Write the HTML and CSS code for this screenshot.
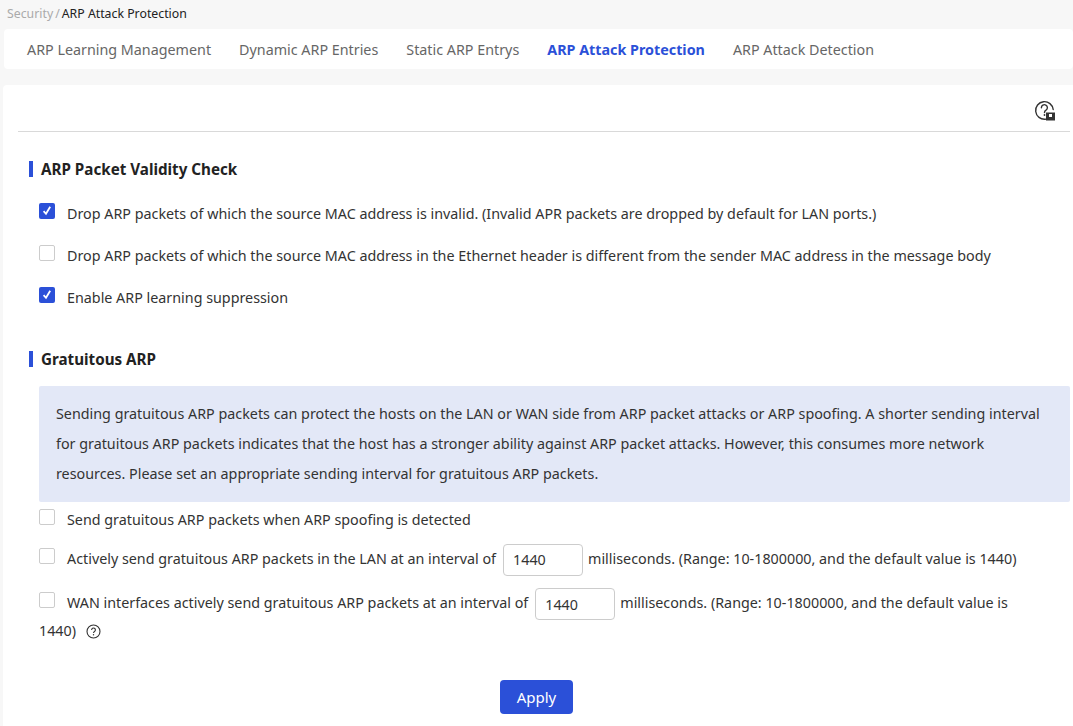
FILE: index.html
```
<!DOCTYPE html>
<html lang="en">
<head>
<meta charset="utf-8">
<title>ARP Attack Protection</title>
<link rel="stylesheet" href="styles.css">
</head>
<body>
<nav class="crumbs"><span class="crumb-parent">Security</span><span class="crumb-sep">/</span><span class="crumb-current">ARP Attack Protection</span></nav>
<div class="tabs">
  <a class="tab">ARP Learning Management</a>
  <a class="tab">Dynamic ARP Entries</a>
  <a class="tab">Static ARP Entrys</a>
  <a class="tab active">ARP Attack Protection</a>
  <a class="tab">ARP Attack Detection</a>
</div>
<main class="panel">
  <div class="toolbar">
    <svg class="help-big" width="22" height="22" viewBox="0 0 22 22" fill="none">
      <path d="M11.5 20.2A8.8 8.8 0 1 1 19.2 10.5" stroke="#333" stroke-width="1.4" stroke-linecap="round"/>
      <path d="M7.4 8.7a3 3 0 1 1 4.6 2.5c-1 .6-1.5 1.2-1.5 2.3" stroke="#333" stroke-width="1.4" stroke-linecap="round"/>
      <circle cx="10.5" cy="16" r=".9" fill="#333"/>
      <rect x="12" y="13.5" width="9" height="8" fill="#333"/>
      <rect x="15" y="15" width="3" height="3" fill="#fff"/>
    </svg>
  </div>
  <section class="section first">
    <h2 class="heading">ARP Packet Validity Check</h2>
    <div class="check-list">
      <label class="row"><span class="box on"><svg width="16" height="16" viewBox="0 0 16 16"><path d="M4.6 8.2 7 10.8 11.2 3.8" fill="none" stroke="#fff" stroke-width="1.8"/></svg></span><span>Drop ARP packets of which the source MAC address is invalid. (Invalid APR packets are dropped by default for LAN ports.)</span></label>
      <label class="row"><span class="box"></span><span>Drop ARP packets of which the source MAC address in the Ethernet header is different from the sender MAC address in the message body</span></label>
      <label class="row"><span class="box on"><svg width="16" height="16" viewBox="0 0 16 16"><path d="M4.6 8.2 7 10.8 11.2 3.8" fill="none" stroke="#fff" stroke-width="1.8"/></svg></span><span>Enable ARP learning suppression</span></label>
    </div>
  </section>
  <section class="section second">
    <h2 class="heading">Gratuitous ARP</h2>
    <p class="notice">Sending gratuitous ARP packets can protect the hosts on the LAN or WAN side from ARP packet attacks or ARP spoofing. A shorter sending interval for gratuitous ARP packets indicates that the host has a stronger ability against ARP packet attacks. However, this consumes more network resources. Please set an appropriate sending interval for gratuitous ARP packets.</p>
    <div class="option one"><span class="box"></span><span>Send gratuitous ARP packets when ARP spoofing is detected</span></div>
    <div class="option two"><span class="box"></span><span>Actively send gratuitous ARP packets in the LAN at an interval of</span><input class="num" value="1440"><span>milliseconds. (Range: 10-1800000, and the default value is 1440)</span></div>
    <div class="option three"><span class="box"></span><span>WAN interfaces actively send gratuitous ARP packets at an interval of</span><input class="num" value="1440"><span>milliseconds. (Range: 10-1800000, and the default value is 1440)</span>
      <svg class="help-small" width="15" height="15" viewBox="0 0 15 15" fill="none"><circle cx="7.5" cy="7.5" r="6.5" stroke="#333" stroke-width="1.1"/><path d="M5.6 5.9a1.9 1.9 0 1 1 2.9 1.6c-.6.4-1 .7-1 1.5" stroke="#333" stroke-width="1.1"/><circle cx="7.5" cy="10.7" r=".7" fill="#333"/></svg>
    </div>
  </section>
  <div class="actions"><button class="apply">Apply</button></div>
</main>
</body>
</html>
```
FILE: styles.css
```
* { box-sizing: border-box; }
html, body { margin: 0; height: 100%; overflow: hidden; }
body { background: #f7f7f7; font-family: "Noto Sans", sans-serif; font-size: 14.32px; color: #333; display: flex; flex-direction: column; }
.crumbs { height: 29px; padding-left: 7px; font-size: 12.3px; line-height: 28px; }
.crumb-parent, .crumb-sep { color: #aaa; }
.crumb-sep { margin: 0 2px; }
.crumb-current { color: #222; }
.tabs { height: 40px; margin: 0 0 16px 4px; padding-left: 23px; background: #fff; border-radius: 4px; display: flex; gap: 28px; align-items: center; color: #666; }
.tab.active { color: #2b50d8; font-weight: 700; }
.panel { flex: 1; margin-left: 3px; background: #fff; border-radius: 4px 0 0 0; padding: 0 3px 0 15px; }
.toolbar { height: 47px; border-bottom: 1px solid #d9d9d9; display: flex; justify-content: flex-end; align-items: flex-end; padding: 0 14px 10px 0; }
.section.first { margin-top: 27px; }
.section.second { margin-top: 37px; }
.heading { margin: 0 0 0 11px; height: 20px; display: flex; align-items: center; gap: 8px; font-size: 15.2px; line-height: 20px; font-weight: 700; color: #222; }
.heading::before { content: ""; width: 4px; height: 16px; background: #2b50d8; }
.check-list { margin: 19px 0 0 21px; display: flex; flex-direction: column; gap: 12px; }
.row { display: flex; height: 30px; align-items: center; gap: 12px; }
.box { flex: none; width: 16px; height: 16px; border: 1px solid #ccc; border-radius: 2px; background: #fff; display: inline-block; position: relative; top: -2px; }
.box.on { background: #2b50d8; border: 0; }
.box svg { display: block; }
.notice { margin: 17px 0 0 21px; padding: 13px 17px; background: #e3e8f7; border-radius: 2px; line-height: 30px; color: #333; height: 116px; }
.option { margin-left: 21px; }
.option .box { margin-right: 12px; vertical-align: -2px; }
.option.one { margin-top: 3px; height: 30px; line-height: 30px; }
.option.two { margin-top: 8px; height: 32px; line-height: 32px; }
.option.three { margin-top: 13px; line-height: 22px; padding-right: 25px; }
.num { width: 80px; height: 32px; border: 1px solid #ccc; border-radius: 4px; margin: 0 5px 0 7px; padding: 0 9px; font: inherit; color: #333; vertical-align: middle; background: #fff; }
.help-small { margin-left: 6px; vertical-align: -3px; }
.actions { display: flex; justify-content: center; margin-top: 38px; padding-right: 15px; }
.apply { width: 73px; height: 34px; background: #2b50d8; color: #fff; border: 0; border-radius: 4px; font: inherit; font-size: 15px; }
```
